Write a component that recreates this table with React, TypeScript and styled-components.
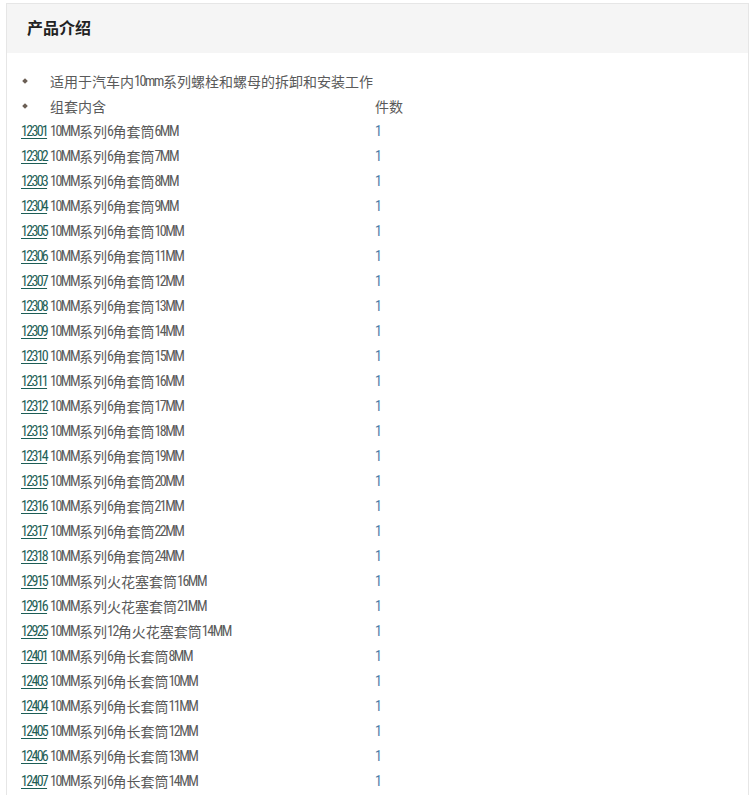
import React from "react";
import styled, { createGlobalStyle } from "styled-components";

const GlobalStyle = createGlobalStyle`
  html, body { margin: 0; padding: 0; background: #fff; }
  body {
    font-family: "Noto Sans CJK SC", "Noto Sans", sans-serif;
    font-size: 14px;
    color: #5a5a5a;
  }
`;

const Page = styled.div`
  padding: 3px 1px 0 6px;
`;

const Panel = styled.section`
  border: 1px solid #e6e6e6;
  border-bottom: none;
  min-height: 791px;
`;

const Header = styled.header`
  height: 49px;
  box-sizing: border-box;
  background: #f5f5f5;
  display: flex;
  align-items: center;
  padding: 0 0 4px 20px;
`;

const Title = styled.h2`
  margin: 0;
  font-size: 16px;
  font-weight: 700;
  color: #222;
  line-height: 1;
`;

const Body = styled.div`
  padding: 15px 0 0 14px;
  display: grid;
  grid-template-columns: 29px 325px auto;
  grid-auto-rows: 25px;
  align-items: center;
`;

const Cell = styled.div`
  display: flex;
  align-items: center;
  white-space: nowrap;
  line-height: 1;
`;

const BulletCell = styled(Cell)`
  padding-left: 2px;
`;

const Diamond = styled.span`
  width: 4px;
  height: 4px;
  background: #6b5f55;
  transform: rotate(45deg);
  display: inline-block;
`;

const Text = styled(Cell)`
  color: #5a5a5a;
`;

const CodeLink = styled.a`
  font-family: "Roboto Condensed", Roboto, sans-serif;
  font-size: 14px;
  letter-spacing: -1.7px;
  color: #1d5e56;
  text-decoration: underline;
  text-underline-offset: 2px;
`;

const Latin = styled.span`
  font-family: "Roboto Condensed", Roboto, sans-serif;
  font-size: 14px;
  letter-spacing: -1.5px;
`;

const Count = styled(Cell)<{ $head?: boolean }>`
  color: ${(p) => (p.$head ? "#5a5a5a" : "#4d7aa6")};
`;

function Mixed({ text }: { text: string }) {
  const parts = text.split(/([A-Za-z0-9]+)/).filter(Boolean);
  return (
    <>
      {parts.map((p, i) =>
        /^[A-Za-z0-9]+$/.test(p) ? <Latin key={i}>{p}</Latin> : <React.Fragment key={i}>{p}</React.Fragment>
      )}
    </>
  );
}

const items: [string, string][] = [
  ["12301", "10MM系列6角套筒6MM"],
  ["12302", "10MM系列6角套筒7MM"],
  ["12303", "10MM系列6角套筒8MM"],
  ["12304", "10MM系列6角套筒9MM"],
  ["12305", "10MM系列6角套筒10MM"],
  ["12306", "10MM系列6角套筒11MM"],
  ["12307", "10MM系列6角套筒12MM"],
  ["12308", "10MM系列6角套筒13MM"],
  ["12309", "10MM系列6角套筒14MM"],
  ["12310", "10MM系列6角套筒15MM"],
  ["12311", "10MM系列6角套筒16MM"],
  ["12312", "10MM系列6角套筒17MM"],
  ["12313", "10MM系列6角套筒18MM"],
  ["12314", "10MM系列6角套筒19MM"],
  ["12315", "10MM系列6角套筒20MM"],
  ["12316", "10MM系列6角套筒21MM"],
  ["12317", "10MM系列6角套筒22MM"],
  ["12318", "10MM系列6角套筒24MM"],
  ["12915", "10MM系列火花塞套筒16MM"],
  ["12916", "10MM系列火花塞套筒21MM"],
  ["12925", "10MM系列12角火花塞套筒14MM"],
  ["12401", "10MM系列6角长套筒8MM"],
  ["12403", "10MM系列6角长套筒10MM"],
  ["12404", "10MM系列6角长套筒11MM"],
  ["12405", "10MM系列6角长套筒12MM"],
  ["12406", "10MM系列6角长套筒13MM"],
  ["12407", "10MM系列6角长套筒14MM"],
];

export default function App() {
  return (
    <>
      <GlobalStyle />
      <Page>
        <Panel>
          <Header>
            <Title>产品介绍</Title>
          </Header>
          <Body>
            <BulletCell><Diamond /></BulletCell>
            <Text><Mixed text="适用于汽车内10mm系列螺栓和螺母的拆卸和安装工作" /></Text>
            <Cell />
            <BulletCell><Diamond /></BulletCell>
            <Text>组套内含</Text>
            <Count $head>件数</Count>
            {items.map(([code, name]) => (
              <React.Fragment key={code}>
                <Cell><CodeLink href="#">{code}</CodeLink></Cell>
                <Text><Mixed text={name} /></Text>
                <Count><Latin>1</Latin></Count>
              </React.Fragment>
            ))}
          </Body>
        </Panel>
      </Page>
    </>
  );
}
